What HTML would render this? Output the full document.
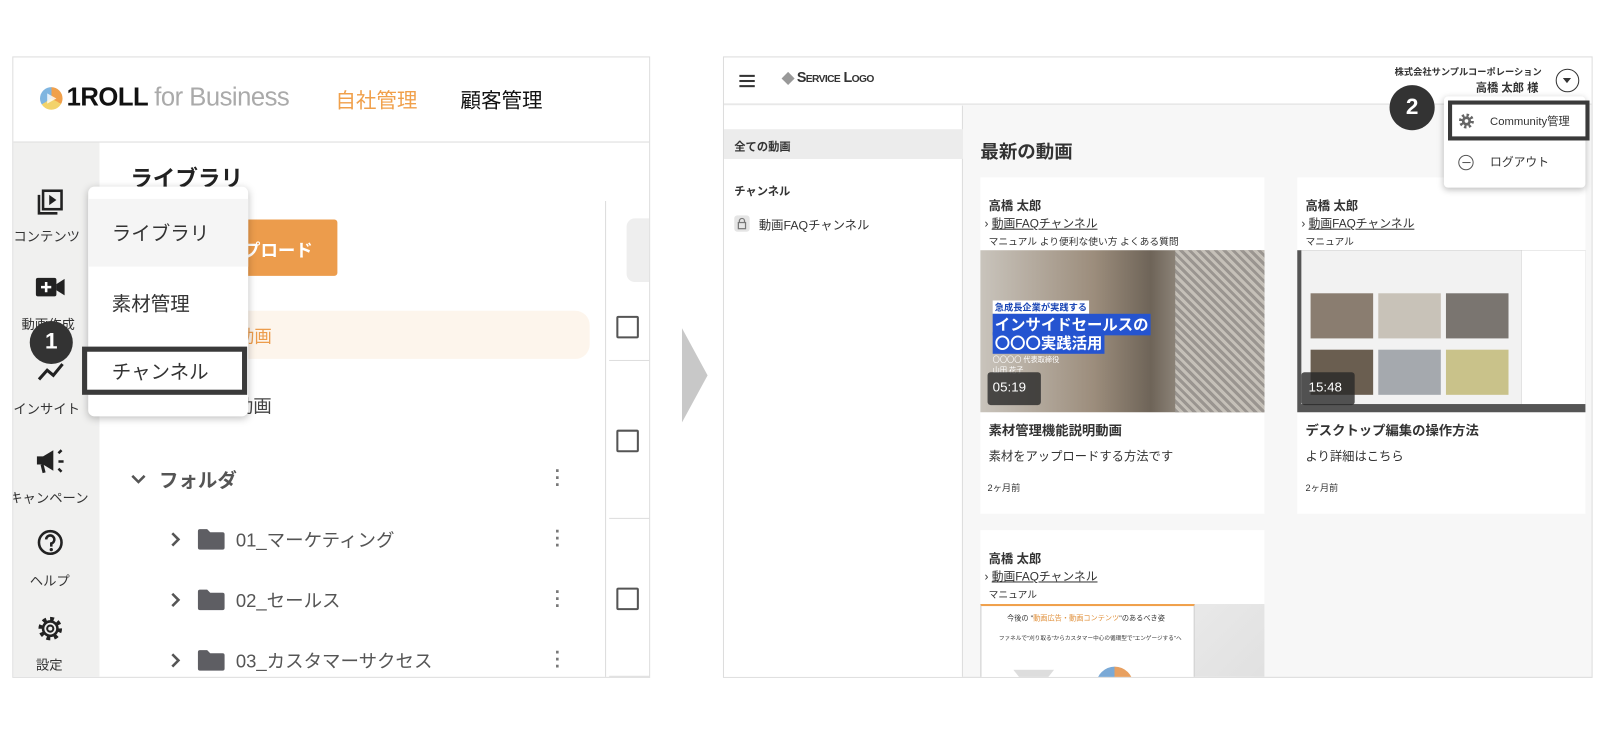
<!DOCTYPE html>
<html><head><meta charset="utf-8"><style>
*{box-sizing:border-box;margin:0;padding:0}
html,body{width:1608px;height:736px;overflow:hidden;background:#fff}
body{font-family:"Liberation Sans","Noto Sans CJK JP",sans-serif;color:#333}
#w{position:absolute;left:0;top:0;width:1568px;height:718px;transform:scale(1.0255);transform-origin:0 0}
.a{position:absolute}
.t{position:absolute;white-space:nowrap}
</style></head><body><div id="w">
<!-- LEFT PANEL -->
<div class="a" style="left:12px;top:55px;width:622px;height:606px;border:1px solid #ddd;overflow:hidden;background:#fff">
 <div class="a" style="left:0;top:82px;width:622px;height:1px;background:#ddd"></div>
 <div class="a" style="left:26px;top:29px;width:22px;height:22px;border-radius:50%;background:conic-gradient(#f0a04b 0 33%,#f3d36b 0 66%,#7fb5e0 0)"></div>
 <div class="a" style="left:33px;top:35px;width:0;height:0;border-left:9px solid #fff;border-top:5px solid transparent;border-bottom:5px solid transparent;opacity:.8"></div>
 <div class="t" style="left:52px;top:25px;font-size:25px;font-weight:bold;color:#111;letter-spacing:-0.5px">1ROLL <span style="font-weight:normal;color:#aaa">for Business</span></div>
 <div class="t" style="left:314px;top:26px;font-size:20px;color:#f0a04b">自社管理</div>
 <div class="t" style="left:436px;top:26px;font-size:20px;color:#111">顧客管理</div>
 <div class="a" style="left:0;top:83px;width:84px;height:523px;background:#f0f0ef"></div>
 <svg class="a" style="left:22px;top:127px" width="28" height="28" viewBox="0 0 28 28"><rect x="7" y="3" width="18" height="18" fill="none" stroke="#222" stroke-width="2.5"/><path d="M3 7v18h18" fill="none" stroke="#222" stroke-width="2.5"/><path d="M13 7l7 5-7 5z" fill="#222"/></svg>
 <div class="t" style="left:0;top:164px;font-size:13px">コンテンツ</div>
 <svg class="a" style="left:20px;top:212px" width="32" height="24" viewBox="0 0 32 24"><rect x="2" y="3" width="20" height="18" rx="2" fill="#222"/><path d="M22 9l8-5v16l-8-5z" fill="#222"/><path d="M12 7v10M7 12h10" stroke="#fff" stroke-width="2.5"/></svg>
 <div class="t" style="left:8px;top:250px;font-size:13px">動画作成</div>
 <svg class="a" style="left:22px;top:295px" width="28" height="22" viewBox="0 0 28 22"><path d="M3 19l8-9 6 5 9-11" fill="none" stroke="#222" stroke-width="3"/></svg>
 <div class="t" style="left:0;top:332px;font-size:13px">インサイト</div>
 <svg class="a" style="left:20px;top:380px" width="32" height="28" viewBox="0 0 32 28"><path d="M3 9h6l10-6v20l-10-6H3z" fill="#222"/><path d="M8 17l2 8" stroke="#222" stroke-width="3"/><path d="M24 6l3-3M24 14h5M24 21l3 3" stroke="#222" stroke-width="2.5"/></svg>
 <div class="t" style="left:-4px;top:419px;font-size:13px">キャンペーン</div>
 <svg class="a" style="left:22px;top:460px" width="28" height="30" viewBox="0 0 28 30"><circle cx="14" cy="13" r="11" fill="none" stroke="#222" stroke-width="2.5"/><path d="M10 10a4 4 0 1 1 5 4v3" fill="none" stroke="#222" stroke-width="2.5"/><circle cx="15" cy="20" r="1.6" fill="#222"/></svg>
 <div class="t" style="left:16px;top:500px;font-size:13px">ヘルプ</div>
 <svg class="a" style="left:22px;top:543px" width="28" height="28" viewBox="0 0 28 28"><circle cx="14" cy="14" r="9" fill="none" stroke="#222" stroke-width="5" stroke-dasharray="3.5 3.5"/><circle cx="14" cy="14" r="7" fill="none" stroke="#222" stroke-width="2.5"/><circle cx="14" cy="14" r="3" fill="none" stroke="#222" stroke-width="2"/></svg>
 <div class="t" style="left:22px;top:582px;font-size:13px">設定</div>

 <div class="t" style="left:114px;top:101px;font-size:22px;font-weight:bold;color:#222">ライブラリ</div>
 <div class="a" style="left:180px;top:158px;width:136px;height:55px;background:#ec9c4c;border-radius:3px"></div>
 <div class="t" style="left:224px;top:174px;font-size:17px;font-weight:bold;color:#fff">プロード</div>
 <div class="a" style="left:180px;top:247px;width:382px;height:47px;background:#fdf5ec;border-radius:14px"></div>
 <div class="t" style="left:218px;top:258px;font-size:17px;color:#ec9c4c">動画</div>
 <div class="t" style="left:216px;top:326px;font-size:18px;color:#444">動画</div>
 <svg class="a" style="left:114px;top:405px" width="16" height="12" viewBox="0 0 16 12"><path d="M2 3l6 6 6-6" fill="none" stroke="#555" stroke-width="2.5"/></svg>
 <div class="t" style="left:142px;top:398px;font-size:19px;font-weight:bold;color:#555">フォルダ</div>
 <svg class="a" style="left:152px;top:462px" width="12" height="16" viewBox="0 0 12 16"><path d="M3 2l6 6-6 6" fill="none" stroke="#555" stroke-width="2.5"/></svg>
 <svg class="a" style="left:152px;top:521px" width="12" height="16" viewBox="0 0 12 16"><path d="M3 2l6 6-6 6" fill="none" stroke="#555" stroke-width="2.5"/></svg>
 <svg class="a" style="left:152px;top:580px" width="12" height="16" viewBox="0 0 12 16"><path d="M3 2l6 6-6 6" fill="none" stroke="#555" stroke-width="2.5"/></svg>
 <svg class="a" style="left:179px;top:459px" width="28" height="22" viewBox="0 0 28 22"><path d="M1 3q0-2 2-2h7l3 3h12q2 0 2 2v13q0 2-2 2H3q-2 0-2-2z" fill="#5e5e63"/></svg>
 <svg class="a" style="left:179px;top:518px" width="28" height="22" viewBox="0 0 28 22"><path d="M1 3q0-2 2-2h7l3 3h12q2 0 2 2v13q0 2-2 2H3q-2 0-2-2z" fill="#5e5e63"/></svg>
 <svg class="a" style="left:179px;top:577px" width="28" height="22" viewBox="0 0 28 22"><path d="M1 3q0-2 2-2h7l3 3h12q2 0 2 2v13q0 2-2 2H3q-2 0-2-2z" fill="#5e5e63"/></svg>
 <div class="t" style="left:217px;top:457px;font-size:18px;color:#555">01_マーケティング</div>
 <div class="t" style="left:217px;top:516px;font-size:18px;color:#555">02_セールス</div>
 <div class="t" style="left:217px;top:575px;font-size:18px;color:#555">03_カスタマーサクセス</div>
 <div class="t" style="left:528px;top:400px;font-size:18px;color:#777;line-height:7px;font-weight:bold">·<br>·<br>·</div>
 <div class="t" style="left:528px;top:459px;font-size:18px;color:#777;line-height:7px;font-weight:bold">·<br>·<br>·</div>
 <div class="t" style="left:528px;top:518px;font-size:18px;color:#777;line-height:7px;font-weight:bold">·<br>·<br>·</div>
 <div class="t" style="left:528px;top:577px;font-size:18px;color:#777;line-height:7px;font-weight:bold">·<br>·<br>·</div>
 <div class="a" style="left:577px;top:140px;width:1px;height:466px;background:#ddd"></div>
 <div class="a" style="left:598px;top:157px;width:40px;height:62px;background:#eee;border-radius:8px"></div>
 <div class="a" style="left:588px;top:252px;width:22px;height:22px;border:2px solid #555;border-radius:2px"></div>
 <div class="a" style="left:588px;top:363px;width:22px;height:22px;border:2px solid #555;border-radius:2px"></div>
 <div class="a" style="left:588px;top:517px;width:22px;height:22px;border:2px solid #555;border-radius:2px"></div>
 <div class="a" style="left:581px;top:295px;width:41px;height:1px;background:#ddd"></div>
 <div class="a" style="left:581px;top:449px;width:41px;height:1px;background:#ddd"></div>
 <div class="a" style="left:581px;top:603px;width:41px;height:1px;background:#ddd"></div>

 <div class="a" style="left:73px;top:126px;width:156px;height:224px;background:#fff;border-radius:6px;box-shadow:0 2px 8px rgba(0,0,0,.25)"></div>
 <div class="a" style="left:73px;top:138px;width:156px;height:66px;background:#f5f5f5"></div>
 <div class="t" style="left:96px;top:157px;font-size:19px;color:#333">ライブラリ</div>
 <div class="t" style="left:96px;top:226px;font-size:19px;color:#333">素材管理</div>
 <div class="a" style="left:67px;top:282px;width:161px;height:47px;border:5px solid #3a3a3a;background:#fff"></div>
 <div class="t" style="left:96px;top:292px;font-size:19px;color:#333">チャンネル</div>
 <div class="a" style="left:16px;top:257px;width:42px;height:42px;border-radius:50%;background:#333"></div>
 <div class="t" style="left:16px;top:264px;width:42px;text-align:center;font-size:22px;font-weight:bold;color:#fff">1</div>
</div>

<!-- ARROW -->
<div class="a" style="left:665px;top:320px;width:0;height:0;border-left:25px solid #c8c8c8;border-top:46px solid transparent;border-bottom:46px solid transparent"></div>

<!-- RIGHT PANEL -->
<div class="a" style="left:705px;top:55px;width:848px;height:606px;border:1px solid #ddd;overflow:hidden;background:#f7f7f7">
 <div class="a" style="left:0;top:0;width:848px;height:46px;background:#fff;border-bottom:1px solid #ddd"></div>
 <div class="a" style="left:15px;top:17px;width:15px;height:2px;background:#333;box-shadow:0 5px 0 #333,0 10px 0 #333"></div>
 <div class="a" style="left:58px;top:16px;width:9px;height:9px;background:#999;transform:rotate(45deg)"></div>
 <div class="t" style="left:71px;top:11px;font-size:14px;font-weight:bold;color:#333;font-variant:small-caps;letter-spacing:-0.6px">Service Logo</div>
 <div class="t" style="left:654px;top:7px;font-size:9px;font-weight:bold;color:#333">株式会社サンプルコーポレーション</div>
 <div class="t" style="left:733px;top:21px;font-size:11px;font-weight:bold;color:#333">高橋 太郎 様</div>
 <div class="a" style="left:811px;top:11px;width:23px;height:23px;border:1.5px solid #333;border-radius:50%"></div>
 <div class="a" style="left:818px;top:20px;width:0;height:0;border-top:5px solid #333;border-left:4.5px solid transparent;border-right:4.5px solid transparent"></div>
 <div class="a" style="left:0;top:47px;width:233px;height:559px;background:#fff;border-right:1px solid #ddd"></div>
 <div class="a" style="left:0;top:70px;width:233px;height:29px;background:#ececec"></div>
 <div class="t" style="left:10px;top:79px;font-size:11px;font-weight:bold;color:#333">全ての動画</div>
 <div class="t" style="left:10px;top:122px;font-size:11px;font-weight:bold;color:#333">チャンネル</div>
 <div class="a" style="left:10px;top:154px;width:15px;height:16px;background:#e5e5e5;border-radius:3px"></div>
 <svg class="a" style="left:12px;top:156px" width="11" height="12" viewBox="0 0 11 12"><path d="M3 5V3.5a2.5 2.5 0 0 1 5 0V5" fill="none" stroke="#777" stroke-width="1.2"/><rect x="2" y="5" width="7" height="6" fill="none" stroke="#777" stroke-width="1.2"/></svg>
 <div class="t" style="left:34px;top:155px;font-size:12px;color:#333">動画FAQチャンネル</div>
 <div class="t" style="left:250px;top:78px;font-size:18px;font-weight:bold;color:#333">最新の動画</div>

 <div class="a" style="left:250px;top:117px;width:277px;height:328px;background:#fff"></div>
 <div class="t" style="left:258px;top:136px;font-size:12px;font-weight:bold">高橋 太郎</div>
 <div class="t" style="left:254px;top:154px;font-size:11.5px">› <u>動画FAQチャンネル</u></div>
 <div class="t" style="left:258px;top:172px;font-size:9.5px">マニュアル より便利な使い方 よくある質問</div>
 <div class="a" style="left:250px;top:188px;width:277px;height:158px;background:linear-gradient(90deg,#c9c4bc,#9c8d7c 40%,#6e6458 60%,#b2aaa0 80%,#8a837a)"></div>
 <div class="a" style="left:440px;top:188px;width:87px;height:158px;background:repeating-linear-gradient(45deg,#9a9590 0 3px,#c5c0b8 3px 6px)"></div>
 <div class="t" style="left:262px;top:237px;font-size:9px;background:#fff;color:#1d48b6;font-weight:bold;padding:0 2px">急成長企業が実践する</div>
 <div class="t" style="left:262px;top:250px;font-size:15px;background:#2554d0;color:#fff;font-weight:bold;padding:0 2px">インサイドセールスの</div>
 <div class="t" style="left:262px;top:268px;font-size:15px;background:#2554d0;color:#fff;font-weight:bold;padding:0 2px">〇〇〇実践活用</div>
 <div class="t" style="left:262px;top:290px;font-size:7px;color:#fff">〇〇〇〇 代表取締役<br>山田 花子</div>
 <div class="a" style="left:257px;top:307px;width:52px;height:32px;background:rgba(40,40,40,.8);border-radius:3px"></div>
 <div class="t" style="left:262px;top:314px;font-size:13px;color:#fff">05:19</div>
 <div class="t" style="left:258px;top:353px;font-size:13px;font-weight:bold">素材管理機能説明動画</div>
 <div class="t" style="left:258px;top:380px;font-size:12px">素材をアップロードする方法です</div>
 <div class="t" style="left:257px;top:413px;font-size:9px">2ヶ月前</div>

 <div class="a" style="left:559px;top:117px;width:281px;height:328px;background:#fff"></div>
 <div class="t" style="left:567px;top:136px;font-size:12px;font-weight:bold">高橋 太郎</div>
 <div class="t" style="left:563px;top:154px;font-size:11.5px">› <u>動画FAQチャンネル</u></div>
 <div class="t" style="left:567px;top:172px;font-size:9.5px">マニュアル</div>
 <div class="a" style="left:559px;top:188px;width:281px;height:158px;background:#555"></div>
 <div class="a" style="left:563px;top:188px;width:215px;height:150px;background:#f2f2f2"></div>
 <div class="a" style="left:778px;top:188px;width:62px;height:150px;background:#fff"></div>
 <div class="a" style="left:572px;top:230px;width:61px;height:44px;background:#8a7d70"></div>
 <div class="a" style="left:638px;top:230px;width:61px;height:44px;background:#c8c2b8"></div>
 <div class="a" style="left:704px;top:230px;width:61px;height:44px;background:#7a7570"></div>
 <div class="a" style="left:572px;top:285px;width:61px;height:44px;background:#6a5e50"></div>
 <div class="a" style="left:638px;top:285px;width:61px;height:44px;background:#a5a9ae"></div>
 <div class="a" style="left:704px;top:285px;width:61px;height:44px;background:#c9c28a"></div>
 <div class="a" style="left:563px;top:307px;width:52px;height:32px;background:rgba(40,40,40,.8);border-radius:3px"></div>
 <div class="t" style="left:570px;top:314px;font-size:13px;color:#fff">15:48</div>
 <div class="t" style="left:567px;top:353px;font-size:13px;font-weight:bold">デスクトップ編集の操作方法</div>
 <div class="t" style="left:567px;top:380px;font-size:12px">より詳細はこちら</div>
 <div class="t" style="left:567px;top:413px;font-size:9px">2ヶ月前</div>

 <div class="a" style="left:250px;top:461px;width:277px;height:150px;background:#fff"></div>
 <div class="t" style="left:258px;top:480px;font-size:12px;font-weight:bold">高橋 太郎</div>
 <div class="t" style="left:254px;top:498px;font-size:11.5px">› <u>動画FAQチャンネル</u></div>
 <div class="t" style="left:258px;top:516px;font-size:9.5px">マニュアル</div>
 <div class="a" style="left:250px;top:533px;width:277px;height:80px;background:linear-gradient(135deg,#f5f5f5,#e0e0e0)"></div>
 <div class="a" style="left:250px;top:533px;width:209px;height:80px;background:#fff;border-top:2px solid #f0a04b;border-left:1px solid #ccc;border-right:1px solid #ccc"></div>
 <div class="t" style="left:276px;top:542px;font-size:7px">今後の "<span style="color:#e0903b">動画広告・動画コンテンツ</span>"のあるべき姿</div>
 <div class="t" style="left:268px;top:562px;font-size:5.5px">ファネルで"刈り取る"からカスタマー中心の循環型で"エンゲージする"へ</div>
 <div class="a" style="left:282px;top:597px;width:40px;height:10px;background:#ddd;clip-path:polygon(0 0,100% 0,80% 100%,20% 100%)"></div>
 <div class="a" style="left:363px;top:594px;width:36px;height:36px;border-radius:50%;background:conic-gradient(#e8a060 0 30%,#7aa9d6 0)"></div>

 <div class="a" style="left:702px;top:38px;width:138px;height:89px;background:#fff;border-radius:4px;box-shadow:0 2px 6px rgba(0,0,0,.25)"></div>
 <div class="a" style="left:706px;top:42px;width:138px;height:39px;border:4px solid #3a3a3a;background:#fff"></div>
 <svg class="a" style="left:716px;top:54px" width="16" height="16" viewBox="0 0 16 16"><circle cx="8" cy="8" r="5.5" fill="none" stroke="#666" stroke-width="3.5" stroke-dasharray="2.2 2.1"/><circle cx="8" cy="8" r="4.5" fill="#666"/><circle cx="8" cy="8" r="1.8" fill="#fff"/></svg>
 <div class="t" style="left:747px;top:54px;font-size:11px;color:#333">Community管理</div>
 <div class="a" style="left:716px;top:95px;width:15px;height:15px;border:1.3px solid #555;border-radius:50%"></div>
 <div class="a" style="left:719.5px;top:102px;width:8px;height:1.3px;background:#555"></div>
 <div class="t" style="left:747px;top:94px;font-size:11.5px;color:#333">ログアウト</div>
 <div class="a" style="left:649px;top:27px;width:44px;height:44px;border-radius:50%;background:#333"></div>
 <div class="t" style="left:649px;top:35px;width:44px;text-align:center;font-size:22px;font-weight:bold;color:#fff">2</div>
</div>
</div></body></html>
